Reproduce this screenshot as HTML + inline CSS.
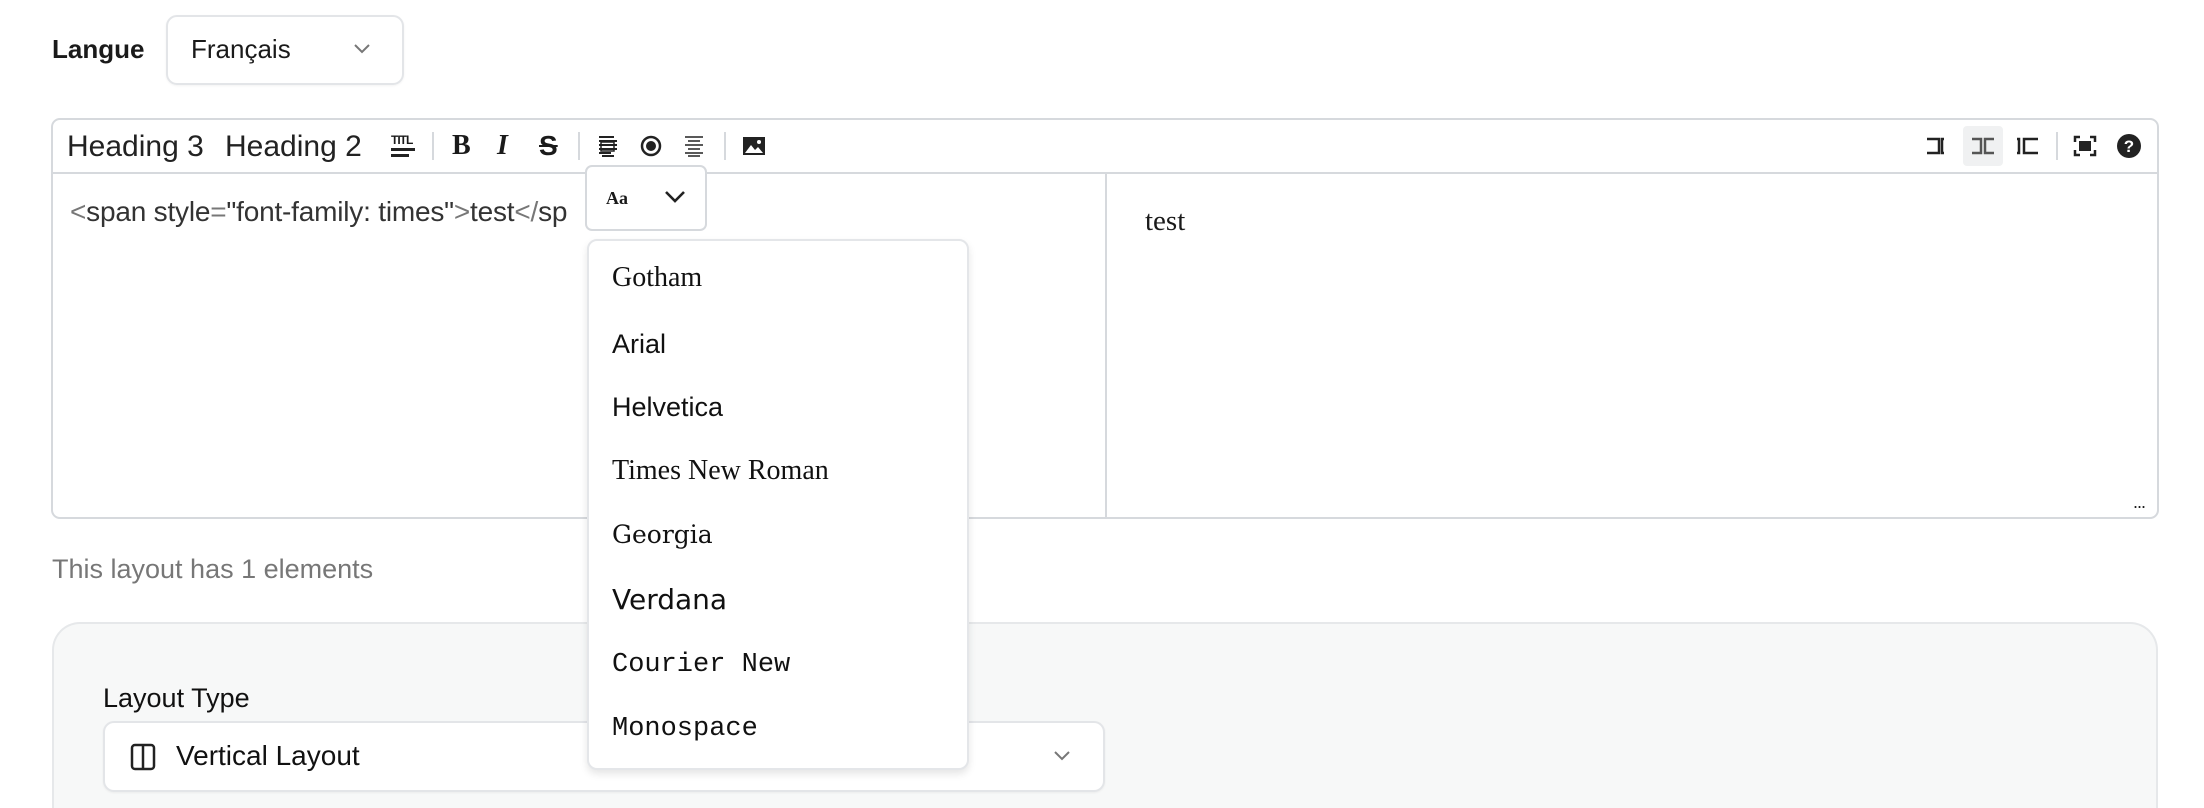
<!DOCTYPE html>
<html style="width:2204px;height:808px;overflow:hidden"><head><meta charset="utf-8"><style>
*{box-sizing:border-box;margin:0;padding:0}
body{width:2204px;height:808px;overflow:hidden;background:#fff;font-family:"Liberation Sans",Arial,sans-serif;color:#1a1a1a;position:relative}
.a{position:absolute}
.ic{position:absolute;top:134px;width:24px;height:24px}
.sep{position:absolute;top:132px;width:2px;height:28px;background:#d6d9dd}
.it{position:absolute;left:612px;font-size:27px;line-height:30px;color:#111}
</style></head><body>
<div class="a" style="left:52px;top:33px;font-size:26px;font-weight:bold;line-height:32px">Langue</div>
<div class="a" style="left:166px;top:15px;width:238px;height:70px;border:2px solid #e3e5e8;border-radius:11px;box-shadow:0 1px 2px rgba(0,0,0,.05)"></div>
<div class="a" style="left:191px;top:33px;font-size:26px;line-height:32px">Français</div>
<svg class="a" style="left:352px;top:42px" width="20" height="14" viewBox="0 0 20 14"><path d="M3 3l7 7 7-7" fill="none" stroke="#777" stroke-width="2"/></svg>

<div class="a" style="left:51px;top:118px;width:2108px;height:401px;border:2px solid #d6d9dd;border-radius:9px"></div>
<div class="a" style="left:53px;top:172px;width:2104px;height:2px;background:#d6d9dd"></div>
<div class="a" style="left:1105px;top:174px;width:2px;height:343px;background:#d6d9dd"></div>
<div class="a" style="left:67px;top:129px;font-size:30px;line-height:36px;color:#222">Heading 3</div>
<div class="a" style="left:225px;top:129px;font-size:30px;line-height:36px;color:#222">Heading 2</div>
<div class="a" style="left:391px;top:134px;font-size:12px;font-weight:bold;line-height:12px;letter-spacing:-1px">TITL</div>
<div class="a" style="left:391px;top:148px;width:24px;height:3px;background:#222"></div>
<div class="a" style="left:391px;top:154px;width:18px;height:3px;background:#222"></div>
<div class="sep" style="left:432px"></div>
<div class="a" style="left:452px;top:128px;font-size:28px;font-weight:bold;font-family:'Liberation Serif',serif;line-height:36px">B</div>
<div class="a" style="left:497px;top:128px;font-size:28px;font-style:italic;font-weight:bold;font-family:'Liberation Serif',serif;line-height:36px">I</div>
<div class="a" style="left:539px;top:128px;font-size:28px;font-weight:bold;line-height:36px;text-decoration:line-through">S</div>
<div class="sep" style="left:578px"></div>
<svg class="ic" style="left:596px" viewBox="0 0 24 24"><path d="M3 3h15M3 7h18M3 11h18M3 15h18M3 19h12M6 22h12" stroke="#222" stroke-width="2" fill="none"/><rect x="5" y="8" width="13" height="9" fill="none" stroke="#222" stroke-width="1.5"/></svg>
<svg class="ic" style="left:639px" viewBox="0 0 24 24"><circle cx="12" cy="12" r="9" fill="none" stroke="#222" stroke-width="2.5"/><circle cx="12" cy="12" r="5" fill="#222"/></svg>
<svg class="ic" style="left:682px" viewBox="0 0 24 24"><path d="M3 3h18M6 7h12M3 11h18M6 15h12M3 19h18M6 22h12" stroke="#222" stroke-width="1.6" fill="none"/></svg>
<div class="sep" style="left:724px"></div>
<svg class="ic" style="left:742px" viewBox="0 0 24 24"><rect x="1" y="3" width="22" height="18" fill="#222"/><path d="M3 19l6-8 4 5 3-3 5 6z" fill="#fff"/><circle cx="17" cy="8" r="2" fill="#fff"/></svg>

<svg class="ic" style="left:1926px" viewBox="0 0 24 24"><path d="M1 5h12v14H1M18 5h-2v14h2" stroke="#222" stroke-width="2.5" fill="none"/></svg>
<div class="a" style="left:1963px;top:126px;width:40px;height:40px;background:#f0f1f2;border-radius:4px"></div>
<svg class="ic" style="left:1971px" viewBox="0 0 24 24"><path d="M1 5h9v14H1M23 5h-9v14h9" stroke="#555" stroke-width="2.5" fill="none"/></svg>
<svg class="ic" style="left:2015px" viewBox="0 0 24 24"><path d="M2 5h2v14H2M23 5H9v14h14" stroke="#222" stroke-width="2.5" fill="none"/></svg>
<div class="sep" style="left:2056px"></div>
<svg class="ic" style="left:2073px" viewBox="0 0 24 24"><path d="M2 8V3h5M17 3h5v5M22 16v5h-5M7 21H2v-5" stroke="#222" stroke-width="2.5" fill="none"/><rect x="6" y="7" width="12" height="10" fill="#222"/></svg>
<svg class="ic" style="left:2117px" viewBox="0 0 24 24"><circle cx="12" cy="12" r="12" fill="#222"/><text x="12" y="18" text-anchor="middle" font-size="17" font-weight="bold" fill="#fff" font-family="Liberation Sans">?</text></svg>

<div class="a" style="left:70px;top:196px;font-size:28px;line-height:32px;color:#333;letter-spacing:-0.2px"><span style="color:#777">&lt;</span>span style<span style="color:#777">=</span>"font-family: times"<span style="color:#777">&gt;</span>test<span style="color:#777">&lt;/</span>sp</div>
<div class="a" style="left:1145px;top:205px;font-size:29px;font-family:'Liberation Serif',serif;line-height:32px">test</div>
<div class="a" style="left:2133px;top:493px;font-size:18px;line-height:18px;letter-spacing:-1px">...</div>

<div class="a" style="left:585px;top:165px;width:122px;height:66px;background:#fff;border:2px solid #d6d9dd;border-radius:7px"></div>
<div class="a" style="left:606px;top:187px;font-size:18px;font-weight:bold;font-family:'Liberation Serif',serif;line-height:22px">Aa</div>
<svg class="a" style="left:664px;top:190px" width="22" height="14" viewBox="0 0 22 14"><path d="M2 2l9 9 9-9" fill="none" stroke="#222" stroke-width="2.6"/></svg>

<div class="a" style="left:52px;top:553px;font-size:27px;line-height:32px;color:#777">This layout has 1 elements</div>
<div class="a" style="left:52px;top:622px;width:2106px;height:186px;background:#f7f8f8;border:2px solid #e6e8ea;border-bottom:none;border-radius:28px 28px 0 0"></div>
<div class="a" style="left:103px;top:682px;font-size:27px;line-height:32px;font-weight:500;color:#111">Layout Type</div>
<div class="a" style="left:103px;top:721px;width:1002px;height:71px;background:#fff;border:2px solid #e3e5e8;border-radius:11px;box-shadow:0 1px 2px rgba(0,0,0,.05)"></div>
<svg class="a" style="left:130px;top:743px" width="26" height="28" viewBox="0 0 26 28"><rect x="2" y="2" width="22" height="24" rx="3" fill="none" stroke="#222" stroke-width="2.5"/><path d="M13 2v24" stroke="#222" stroke-width="2.5"/></svg>
<div class="a" style="left:176px;top:740px;font-size:28px;line-height:32px;color:#111">Vertical Layout</div>
<svg class="a" style="left:1052px;top:749px" width="20" height="14" viewBox="0 0 20 14"><path d="M3 3l7 7 7-7" fill="none" stroke="#777" stroke-width="2"/></svg>

<div class="a" style="left:587px;top:239px;width:382px;height:531px;background:#fff;border:2px solid #e4e6e9;border-radius:10px;box-shadow:0 4px 8px rgba(0,0,0,.1)"></div>
<div class="it" style="top:263px;font-family:'Liberation Serif',serif;font-size:28px">Gotham</div>
<div class="it" style="top:329px">Arial</div>
<div class="it" style="top:392px">Helvetica</div>
<div class="it" style="top:456px;font-family:'Liberation Serif',serif;font-size:28px">Times New Roman</div>
<div class="it" style="top:520px;font-family:'DejaVu Serif',serif;font-size:25px">Georgia</div>
<div class="it" style="top:585px;font-family:'DejaVu Sans',sans-serif;font-size:28px">Verdana</div>
<div class="it" style="top:650px;font-family:'Liberation Mono',monospace;font-size:27px">Courier New</div>
<div class="it" style="top:714px;font-family:'Liberation Mono',monospace;font-size:27px">Monospace</div>
</body></html>
